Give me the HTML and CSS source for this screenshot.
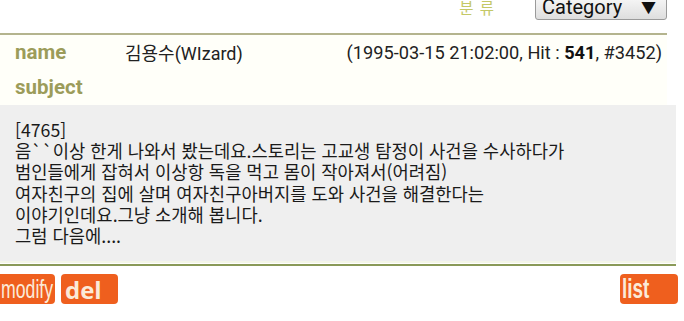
FILE: index.html
```html
<!DOCTYPE html>
<html lang="ko">
<head>
<meta charset="utf-8">
<link rel="stylesheet" href="styles.css">
</head>
<body>
<div class="top">
  <span class="cat-label">분 류</span>
  <div class="select"><span>Category</span><span class="arrow">▼</span></div>
</div>
<div class="board">
  <div class="head">
    <div class="row">
      <span class="label">name</span>
      <span class="author">김용수(WIzard)</span>
      <span class="meta">(1995-03-15 21:02:00, Hit : <b>541</b>, #3452)</span>
    </div>
    <div class="row">
      <span class="label">subject</span>
    </div>
  </div>
  <div class="content">[4765]<br>음``이상 한게 나와서 봤는데요.스토리는 고교생 탐정이 사건을 수사하다가<br>범인들에게 잡혀서 이상항 독을 먹고 몸이 작아져서(어려짐)<br>여자친구의 집에 살며 여자친구아버지를 도와 사건을 해결한다는<br>이야기인데요.그냥 소개해 봅니다.<br>그럼 다음에....</div>
  <div class="rule"></div>
</div>
<div class="buttons">
  <div class="left">
    <a class="btn modify"><span>modify</span></a>
    <a class="btn del">del</a>
  </div>
  <a class="btn list"><span>list</span></a>
</div>
</body>
</html>
```
FILE: styles.css
```css
* { box-sizing: border-box; }
html, body { margin: 0; padding: 0; background: #fff; }
body {
  width: 684px;
  height: 321px;
  overflow: hidden;
  font-family: Roboto, "Noto Sans CJK KR", sans-serif;
  color: #222;
}
.top {
  height: 33px;
  display: flex;
  justify-content: flex-end;
  align-items: flex-start;
  padding-right: 17px;
}
.cat-label {
  color: #c4c866;
  font-family: "Noto Sans CJK KR", sans-serif;
  font-size: 15.5px;
  line-height: 20px;
  margin-top: -3px;
  margin-right: 40px;
  letter-spacing: 1px;
}
.select {
  width: 132px;
  height: 21px;
  margin-top: -1px;
  display: flex;
  justify-content: space-between;
  align-items: flex-end;
  padding: 0 10px 0 6px;
  border: 1px solid #9a9a9a;
  border-radius: 0 0 3px 3px;
  background: linear-gradient(#f4f4f4, #dedede);
  font-size: 20px;
  line-height: 23px;
  color: #111;
}
.select .arrow { font-size: 15px; line-height: 22px; }
.board { width: 676px; }
.head {
  width: 667px;
  border-top: 2px solid #b4b48e;
  background: #fffff9;
}
.row {
  display: flex;
  align-items: center;
  height: 34px;
  padding-left: 15px;
}
.row + .row { height: 36px; }
.label {
  width: 110px;
  color: #9c9c5a;
  font-weight: bold;
  font-size: 20.5px;
}
.author { font-size: 18px; color: #222; }
.meta {
  margin-left: auto;
  padding-right: 5px;
  font-size: 18.2px;
  color: #222;
}
.meta b { color: #111; }
.content {
  background: #efefef;
  padding: 14px 15px 10px;
  font-family: "Noto Sans CJK KR", sans-serif;
  font-size: 17.7px;
  line-height: 21.2px;
  color: #1a1a1a;
  height: 156px;
}
.rule {
  height: 5px;
  border-top: 2px solid #f4f6e8;
  border-bottom: 2px solid #8a9a58;
  background: #fff;
}
.buttons {
  width: 678px;
  display: flex;
  justify-content: space-between;
  margin-top: 8px;
}
.left { display: flex; gap: 6px; }
.btn {
  display: flex;
  align-items: center;
  height: 30px;
  background: #ef5f1e;
  color: #fbead8;
  border-radius: 4px;
  font-family: "Liberation Sans", Arial, sans-serif;
  font-weight: bold;
  overflow: hidden;
}
.btn span { display: inline-block; transform-origin: left center; white-space: nowrap; }
.modify { width: 55px; border-radius: 0 4px 4px 0; padding-left: 1px; }
.modify span { font-size: 26px; transform: scaleX(0.68); font-weight: normal; }
.del { width: 57px; font-size: 24px; padding-left: 4px; font-family: "Open Sans", sans-serif; }
.list { width: 58px; padding-left: 2px; }
.list span { font-size: 27px; transform: scaleX(0.7); }
```
